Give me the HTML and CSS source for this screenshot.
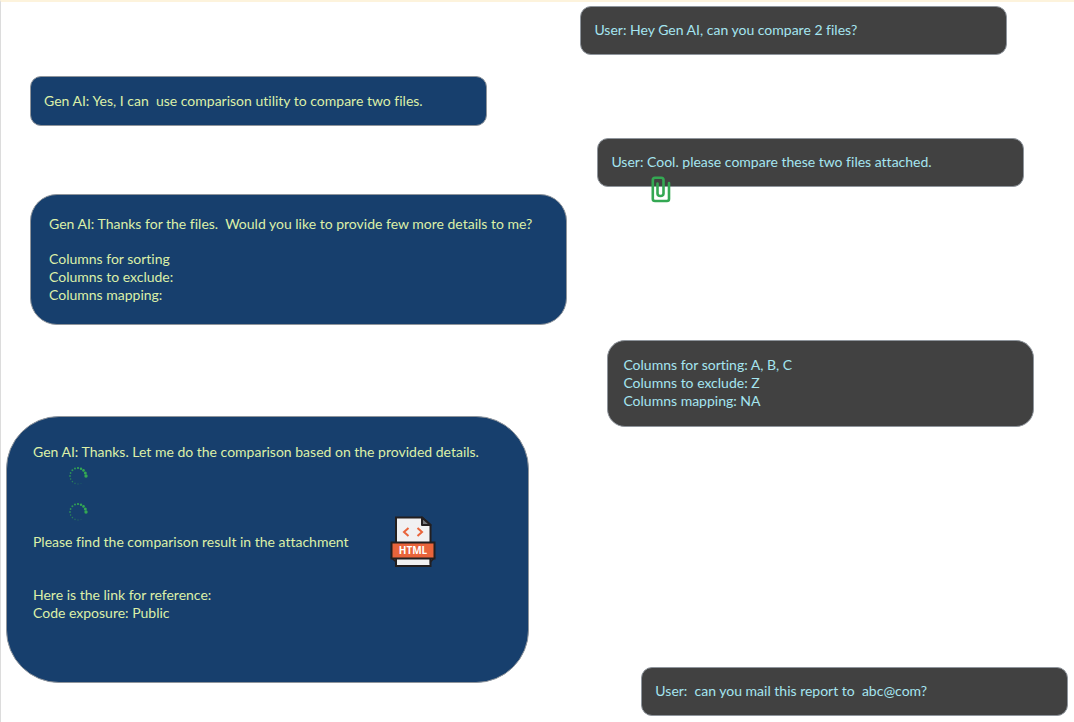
FILE: index.html
```html
<!DOCTYPE html>
<html lang="en">
<head>
<meta charset="utf-8">
<title>Gen AI chat</title>
<link rel="stylesheet" href="styles.css">
</head>
<body>
<main class="chat">
  <section class="column column-ai" aria-label="Gen AI">
    <article class="bubble ai short">
      <p>Gen AI: Yes, I can&nbsp; use comparison utility to compare two files.</p>
    </article>
    <article class="bubble ai details">
      <p>Gen AI: Thanks for the files.&nbsp; Would you like to provide few more details to me?</p>
      <p class="fields">Columns for sorting<br>Columns to exclude:<br>Columns mapping:</p>
    </article>
    <article class="bubble ai result">
      <p>Gen AI: Thanks. Let me do the comparison based on the provided details.</p>
      <div class="spinners">
        <svg class="spinner" viewBox="0 0 20 20" role="img" aria-label="Loading">
          <g id="dots" fill="#34a853">
            <circle cx="18" cy="10" r="1.7"/><circle cx="17.3" cy="7" r="1.5"/><circle cx="15.5" cy="4.4" r="1.3"/><circle cx="13" cy="2.7" r="1.2"/><circle cx="10" cy="2" r="1.1"/><circle cx="7" cy="2.6" r="1" opacity=".9"/><circle cx="4.4" cy="4.3" r="1" opacity=".8"/><circle cx="2.6" cy="7" r=".9" opacity=".8"/><circle cx="2" cy="10" r=".9" opacity=".7"/><circle cx="2.6" cy="13" r=".8" opacity=".7"/><circle cx="4.4" cy="15.6" r=".8" opacity=".6"/><circle cx="7" cy="17.4" r=".8" opacity=".4"/><circle cx="10" cy="18" r=".8" opacity=".3"/><circle cx="13" cy="17.4" r=".7" opacity=".2"/>
          </g>
        </svg>
        <svg class="spinner" viewBox="0 0 20 20" role="img" aria-label="Loading"><use href="#dots"/></svg>
      </div>
      <div class="attachment">
        <p>Please find the comparison result in the attachment</p>
        <svg class="html-file" viewBox="0 0 46 52" role="img" aria-label="HTML file">
          <path d="M6 1.500H32L40.500 9V50H6Z" fill="#f1f1f2" stroke="#231f20" stroke-width="2"/>
          <path d="M32 1.500V9H40.500Z" fill="#77787b" stroke="#231f20" stroke-width="2" stroke-linejoin="round"/>
          <path d="M2 42L6 46V42ZM44 42L40.500 46V42Z" fill="#b8402c" stroke="#231f20" stroke-width="1.500"/>
          <path d="M1.500 26.500H44.500V42.500H1.500Z" fill="#e9643b" stroke="#231f20" stroke-width="2"/>
          <path d="M18.500 12L14 16L18.500 20M27.500 12L32 16L27.500 20" fill="none" stroke="#e9643b" stroke-width="2"/>
          <text class="file-label" x="23" y="38" text-anchor="middle">HTML</text>
        </svg>
      </div>
      <p class="reference">Here is the link for reference:<br>Code exposure: Public</p>
    </article>
  </section>
  <section class="column column-user" aria-label="User">
    <article class="bubble user short first">
      <p>User: Hey Gen AI, can you compare 2 files?</p>
    </article>
    <article class="bubble user short second">
      <p>User: Cool. please compare these two files attached.</p>
      <svg class="clip" viewBox="0 0 20 27" role="img" aria-label="Attachment">
        <path d="M6.500 7.500V17.500Q6.500 20 9.500 20Q12.500 20 12.500 17.500V4Q12.500 1.800 10.300 1.800H4Q1.800 1.800 1.800 4V23Q1.800 25 4 25H16Q18 25 18 23V7" fill="none" stroke="#34a853" stroke-width="2.600" stroke-linecap="round"/>
      </svg>
    </article>
    <article class="bubble user answers">
      <p>Columns for sorting: A, B, C<br>Columns to exclude: Z<br>Columns mapping: NA</p>
    </article>
    <article class="bubble user short last">
      <p>User:&nbsp; can you mail this report to&nbsp; abc@com?</p>
    </article>
  </section>
</main>
</body>
</html>
```
FILE: styles.css
```css
* {
  box-sizing: border-box;
}

body {
  margin: 0;
  background: #fff;
  font: 14px/18px Lato, "Liberation Sans", sans-serif;
  font-variant-ligatures: none;
}

p {
  margin: 0;
}

svg {
  display: block;
}

.chat {
  display: grid;
  grid-template-columns: 54% 46%;
  min-height: 100vh;
  border-top: 2px solid #fdf3dc;
  border-left: 1px solid #dcdcdc;
}

.column {
  display: flex;
  flex-direction: column;
  align-items: flex-start;
}

.column-ai {
  padding: 74px 0 36px 5px;
}

.column-user {
  padding: 4px 6px 6px 0;
}

.bubble {
  position: relative;
  border: 1px solid #8f959c;
}

.ai {
  background: #173f6d;
  color: #dcf0a8;
}

.user {
  background: #414141;
  color: #a5e5f0;
  width: 87.5%;
}

.short {
  padding: 15px 13px;
  border-radius: 11px;
}

.user.short {
  padding-top: 14px;
}

.ai.short {
  width: 79.5%;
  margin-left: 24px;
}

.details {
  width: 93.5%;
  margin: 68px 0 0 24px;
  padding: 20px 18px;
  border-radius: 27px;
}

.fields {
  margin-top: 17px;
}

.result {
  width: 91%;
  margin-top: 91px;
  padding: 26px 26px 60px;
  border-radius: 53px;
}

.spinners {
  display: grid;
  gap: 16px;
  margin: 5px 0 0 35px;
}

.spinner {
  width: 20px;
  height: 20px;
}

.attachment {
  display: flex;
  align-items: center;
  gap: 41px;
  margin-top: -6px;
}

.html-file {
  width: 46px;
  height: 52px;
  flex: none;
}

.file-label {
  font: 700 10px "Open Sans", sans-serif;
  fill: #fff;
}

.reference {
  margin-top: 18px;
}

.second {
  margin: 83px 0 0 17px;
}

.clip {
  position: absolute;
  top: 37px;
  left: 53px;
  width: 20px;
  height: 27px;
}

.answers {
  margin: 153px 0 0 27px;
  padding: 15px 15px 16px;
  border-radius: 18px;
}

.last {
  margin: auto 0 0 auto;
}
```
